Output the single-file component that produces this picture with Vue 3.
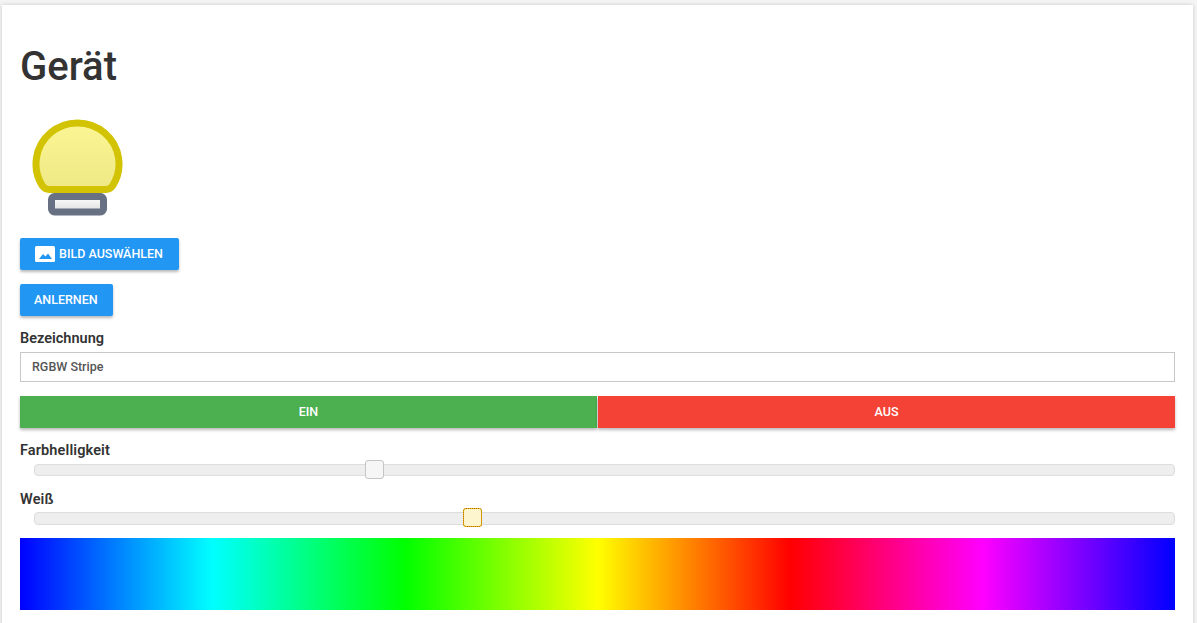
<script setup>
const sliders = [
  { label: 'Farbhelligkeit', pct: 28.97, active: false },
  { label: 'Weiß', pct: 37.58, active: true },
]
</script>

<template>
  <div class="page">
    <main class="card">
      <h1 class="title">Gerät</h1>
      <svg class="bulb" width="92" height="100" viewBox="0 0 92 100">
        <defs>
          <linearGradient id="glass" x1="0" y1="0" x2="0" y2="1">
            <stop offset="0" stop-color="#fbf693" />
            <stop offset="1" stop-color="#eee985" />
          </linearGradient>
          <linearGradient id="cap" x1="0" y1="0" x2="0" y2="1">
            <stop offset="0" stop-color="#ffffff" />
            <stop offset="1" stop-color="#dcdcdc" />
          </linearGradient>
        </defs>
        <path d="M17 71.500 C14 71.500 12 70 10.500 68 A41.500 41 0 1 1 80.500 68 C79 70 77 71.500 74 71.500 Z" fill="url(#glass)" stroke="#d2c304" stroke-width="7" stroke-linejoin="round" />
        <rect x="19.500" y="78.500" width="52" height="15.500" rx="3" fill="url(#cap)" stroke="#687083" stroke-width="7" />
      </svg>
      <div class="btn-row">
        <button class="btn with-icon">
          <svg class="btn-icon" width="20" height="16" viewBox="0 0 20 16">
            <rect width="20" height="16" rx="1.500" fill="#fff" />
            <path d="M4 13 L8 8 L10.500 10.500 L13 7.500 L17 13 Z" fill="#2196f3" />
          </svg>
          BILD AUSWÄHLEN
        </button>
      </div>
      <div class="btn-row second">
        <button class="btn">ANLERNEN</button>
      </div>
      <label class="label name-label">Bezeichnung</label>
      <input class="input" type="text" value="RGBW Stripe" />
      <div class="toggle">
        <button class="toggle-btn on">EIN</button>
        <button class="toggle-btn off">AUS</button>
      </div>
      <div v-for="s in sliders" :key="s.label" class="slider-block">
        <div class="label">{{ s.label }}</div>
        <div class="track">
          <span class="handle" :class="{ active: s.active }" :style="{ left: s.pct + '%' }"></span>
        </div>
      </div>
      <div class="spectrum"></div>
    </main>
  </div>
</template>

<style>
html, body {
  margin: 0;
  background: #f4f4f4;
  overflow: hidden;
}
</style>

<style scoped>
.page {
  padding: 5px 4px 0 2px;
  height: 618px;
  overflow: hidden;
  font-family: Roboto, "Liberation Sans", sans-serif;
  color: #333;
}
.card {
  background: #fff;
  box-shadow: 0 0 4px rgba(0, 0, 0, 0.18);
  padding: 39px 18px 0;
  height: 640px;
  box-sizing: border-box;
}
.title {
  margin: 0;
  font-size: 40px;
  line-height: 46px;
  font-weight: 500;
  color: #333;
}
.bulb {
  display: block;
  margin: 28px 0 0 12px;
}
.btn-row {
  margin-top: 20px;
  display: flex;
}
.btn-row.second {
  margin-top: 14px;
}
.btn {
  height: 32px;
  padding: 0 15px 0 14px;
  border: 0;
  border-radius: 2px;
  background: #2196f3;
  color: #fff;
  font: 500 12.500px/32px Roboto, sans-serif;
  display: flex;
  align-items: center;
  gap: 4px;
  box-shadow: 0 2px 3px rgba(0, 0, 0, 0.28);
}
.btn.with-icon {
  padding-right: 16px;
}
.btn-icon {
  margin-left: 1px;
}
.label {
  font-size: 14.500px;
  font-weight: 600;
  line-height: 18px;
  color: #333;
}
.name-label {
  display: block;
  margin-top: 14px;
}
.input {
  display: block;
  width: 100%;
  box-sizing: border-box;
  height: 30px;
  margin-top: 4px;
  padding: 0 11px 2px;
  border: 1px solid #c8c8c8;
  border-radius: 0;
  outline: 0;
  font: 500 12.500px Roboto, sans-serif;
  color: #555;
}
.toggle {
  display: flex;
  gap: 1px;
  margin-top: 14px;
}
.toggle-btn {
  flex: 1;
  height: 32px;
  border: 0;
  padding: 0 0 2px;
  color: #fff;
  font: 500 12.500px Roboto, sans-serif;
  box-shadow: 0 2px 3px rgba(0, 0, 0, 0.28);
}
.toggle-btn.on {
  background: #4caf50;
}
.toggle-btn.off {
  background: #f44336;
}
.slider-block {
  margin-top: 14px;
}
.slider-block + .slider-block {
  margin-top: 15px;
}
.slider-block .label {
  letter-spacing: 0.12px;
}
.track {
  position: relative;
  height: 12px;
  margin: 4px 0 0 14px;
  background: #eee;
  border: 1px solid #ddd;
  border-radius: 4px;
  box-sizing: border-box;
}
.slider-block + .slider-block .track {
  height: 13px;
  margin-top: 3px;
}
.handle {
  position: absolute;
  top: -5px;
  width: 19px;
  height: 19px;
  box-sizing: border-box;
  background: #f6f6f6;
  border: 1px solid #c5c5c5;
  border-radius: 3px;
}
.handle.active {
  background: linear-gradient(#fdf5ce, #fdf5ce) padding-box, #fbcb09 border-box;
  border: 1px dotted #a85a00;
}
.spectrum {
  height: 72px;
  margin-top: 13px;
  background: linear-gradient(to right, #00f, #0ff, #0f0, #ff0, #f00, #f0f, #00f);
}
</style>
